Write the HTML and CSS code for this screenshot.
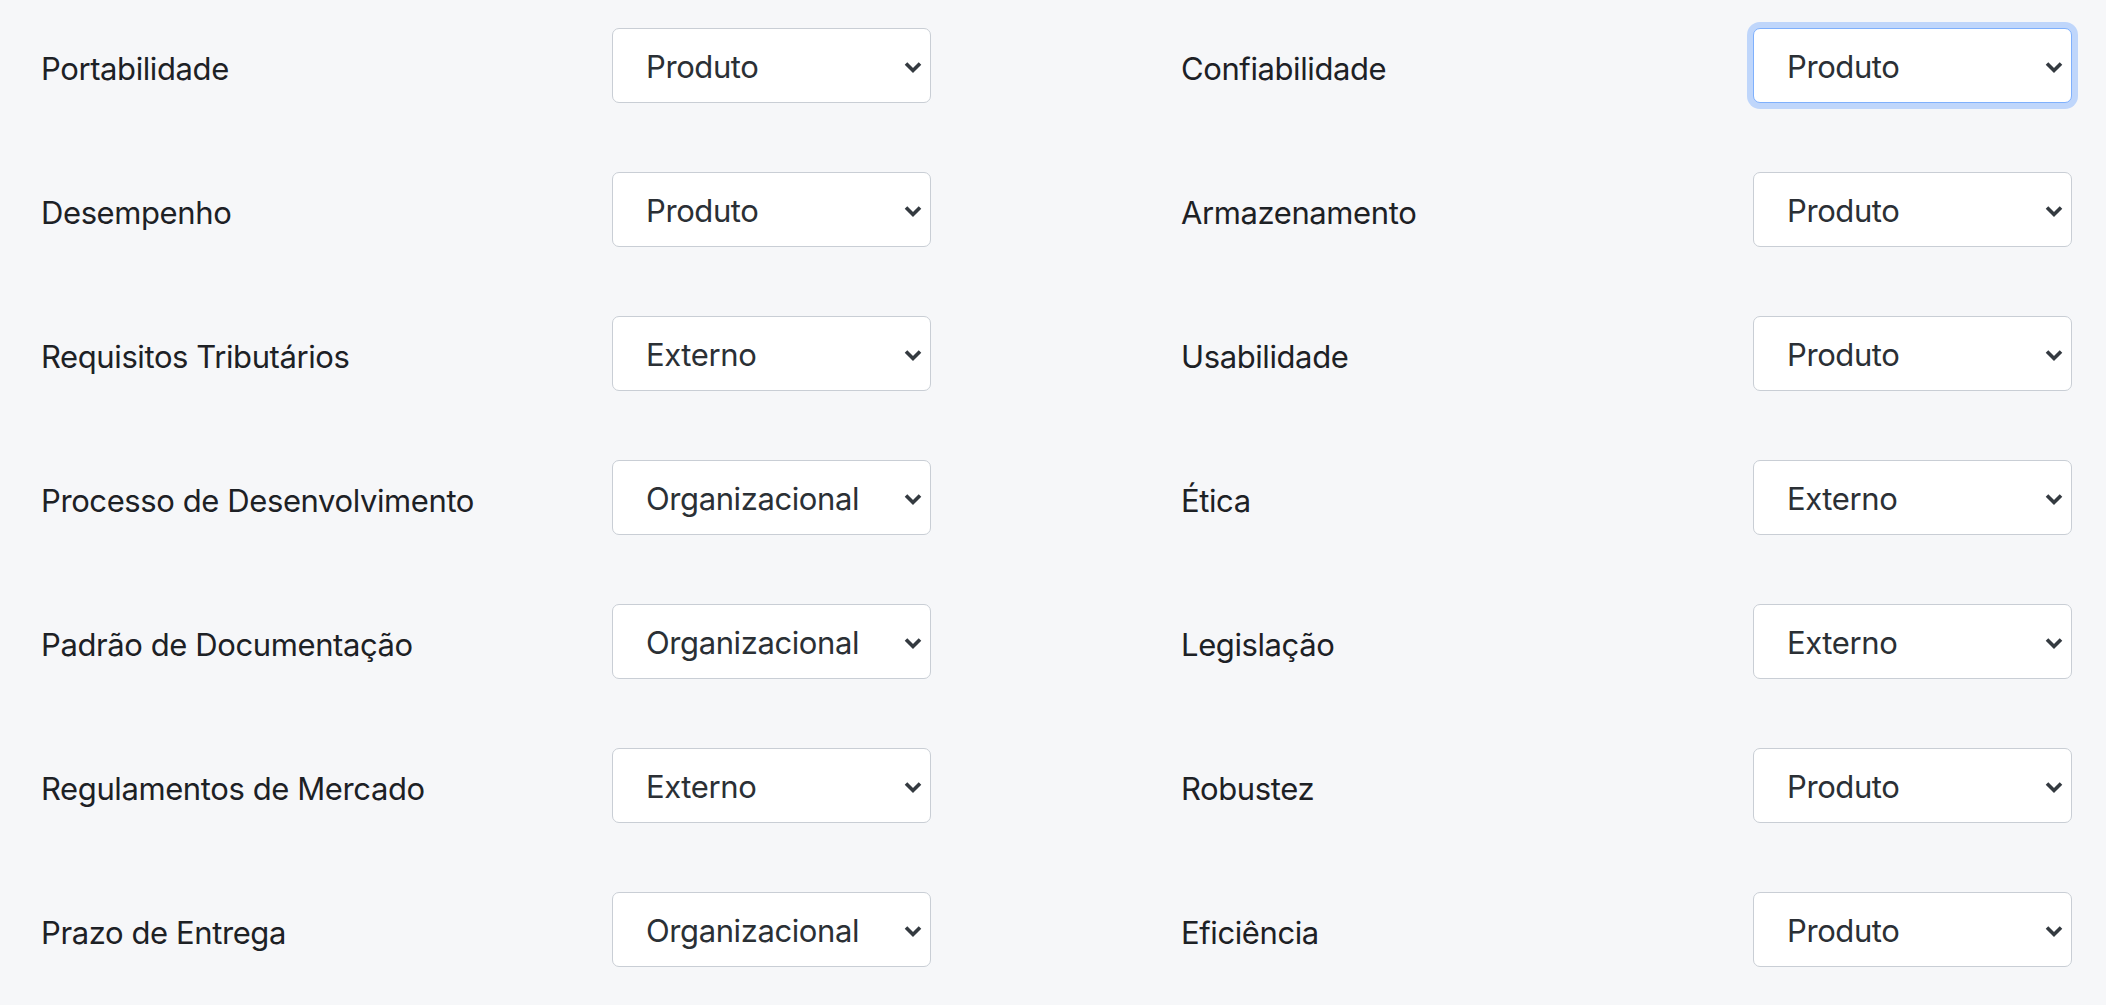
FILE: index.html
```html
<!DOCTYPE html>
<html lang="pt-BR">
<head>
<meta charset="utf-8">
<title>Classificação de Requisitos</title>
<link rel="stylesheet" href="styles.css">
</head>
<body>
<main class="page">
  <div class="form-grid">
    <div class="field"><label class="field-label">Portabilidade</label><div class="select-wrap"><select class="form-select"><option selected>Produto</option><option>Organizacional</option><option>Externo</option></select><svg class="chevron" viewBox="0 0 20 14"><path d="M3 3 L10 10 L17 3"/></svg></div></div>
    <div class="field"><label class="field-label">Confiabilidade</label><div class="select-wrap"><select class="form-select is-focused"><option selected>Produto</option><option>Organizacional</option><option>Externo</option></select><svg class="chevron" viewBox="0 0 20 14"><path d="M3 3 L10 10 L17 3"/></svg></div></div>

    <div class="field"><label class="field-label">Desempenho</label><div class="select-wrap"><select class="form-select"><option selected>Produto</option><option>Organizacional</option><option>Externo</option></select><svg class="chevron" viewBox="0 0 20 14"><path d="M3 3 L10 10 L17 3"/></svg></div></div>
    <div class="field"><label class="field-label">Armazenamento</label><div class="select-wrap"><select class="form-select"><option selected>Produto</option><option>Organizacional</option><option>Externo</option></select><svg class="chevron" viewBox="0 0 20 14"><path d="M3 3 L10 10 L17 3"/></svg></div></div>

    <div class="field"><label class="field-label">Requisitos Tributários</label><div class="select-wrap"><select class="form-select"><option>Produto</option><option>Organizacional</option><option selected>Externo</option></select><svg class="chevron" viewBox="0 0 20 14"><path d="M3 3 L10 10 L17 3"/></svg></div></div>
    <div class="field"><label class="field-label">Usabilidade</label><div class="select-wrap"><select class="form-select"><option selected>Produto</option><option>Organizacional</option><option>Externo</option></select><svg class="chevron" viewBox="0 0 20 14"><path d="M3 3 L10 10 L17 3"/></svg></div></div>

    <div class="field"><label class="field-label">Processo de Desenvolvimento</label><div class="select-wrap"><select class="form-select"><option>Produto</option><option selected>Organizacional</option><option>Externo</option></select><svg class="chevron" viewBox="0 0 20 14"><path d="M3 3 L10 10 L17 3"/></svg></div></div>
    <div class="field"><label class="field-label">Ética</label><div class="select-wrap"><select class="form-select"><option>Produto</option><option>Organizacional</option><option selected>Externo</option></select><svg class="chevron" viewBox="0 0 20 14"><path d="M3 3 L10 10 L17 3"/></svg></div></div>

    <div class="field"><label class="field-label">Padrão de Documentação</label><div class="select-wrap"><select class="form-select"><option>Produto</option><option selected>Organizacional</option><option>Externo</option></select><svg class="chevron" viewBox="0 0 20 14"><path d="M3 3 L10 10 L17 3"/></svg></div></div>
    <div class="field"><label class="field-label">Legislação</label><div class="select-wrap"><select class="form-select"><option>Produto</option><option>Organizacional</option><option selected>Externo</option></select><svg class="chevron" viewBox="0 0 20 14"><path d="M3 3 L10 10 L17 3"/></svg></div></div>

    <div class="field"><label class="field-label">Regulamentos de Mercado</label><div class="select-wrap"><select class="form-select"><option>Produto</option><option>Organizacional</option><option selected>Externo</option></select><svg class="chevron" viewBox="0 0 20 14"><path d="M3 3 L10 10 L17 3"/></svg></div></div>
    <div class="field"><label class="field-label">Robustez</label><div class="select-wrap"><select class="form-select"><option selected>Produto</option><option>Organizacional</option><option>Externo</option></select><svg class="chevron" viewBox="0 0 20 14"><path d="M3 3 L10 10 L17 3"/></svg></div></div>

    <div class="field"><label class="field-label">Prazo de Entrega</label><div class="select-wrap"><select class="form-select"><option>Produto</option><option selected>Organizacional</option><option>Externo</option></select><svg class="chevron" viewBox="0 0 20 14"><path d="M3 3 L10 10 L17 3"/></svg></div></div>
    <div class="field"><label class="field-label">Eficiência</label><div class="select-wrap"><select class="form-select"><option selected>Produto</option><option>Organizacional</option><option>Externo</option></select><svg class="chevron" viewBox="0 0 20 14"><path d="M3 3 L10 10 L17 3"/></svg></div></div>
  </div>
</main>
</body>
</html>
```

FILE: styles.css
```css
html, body {
  margin: 0;
  padding: 0;
  background: #ffffff;
}

.page {
  background: #f6f7f9;
  padding: 28px 34px 38px 41px;
  font-family: Inter, "Liberation Sans", sans-serif;
  color: #212529;
}

.form-grid {
  display: grid;
  grid-template-columns: 890px 891px;
  column-gap: 250px;
  row-gap: 69px;
}

.field {
  display: flex;
  align-items: center;
  justify-content: space-between;
  height: 75px;
}

.field-label {
  font-size: 31px;
  letter-spacing: -0.4px;
  line-height: 1.2;
  color: #1d2125;
  padding-top: 6px;
}

.select-wrap {
  position: relative;
  width: 319px;
  height: 75px;
}

.form-select {
  appearance: none;
  -webkit-appearance: none;
  box-sizing: border-box;
  width: 100%;
  height: 100%;
  margin: 0;
  padding: 2px 50px 0 33px;
  font-family: Inter, "Liberation Sans", sans-serif;
  font-size: 31px;
  letter-spacing: -0.4px;
  color: #2b3035;
  background: #ffffff;
  border: 1.5px solid #c9ced5;
  border-radius: 7px;
  outline: none;
}

.form-select.is-focused {
  border-color: #7fb0fc;
  box-shadow: 0 0 0 6px #bfd6fb;
}

.chevron {
  position: absolute;
  right: 8px;
  top: 50%;
  width: 20px;
  height: 14px;
  transform: translateY(-40%);
  pointer-events: none;
}

.chevron path {
  fill: none;
  stroke: #343a40;
  stroke-width: 3.6;
  stroke-linejoin: miter;
  stroke-linecap: butt;
}
```
